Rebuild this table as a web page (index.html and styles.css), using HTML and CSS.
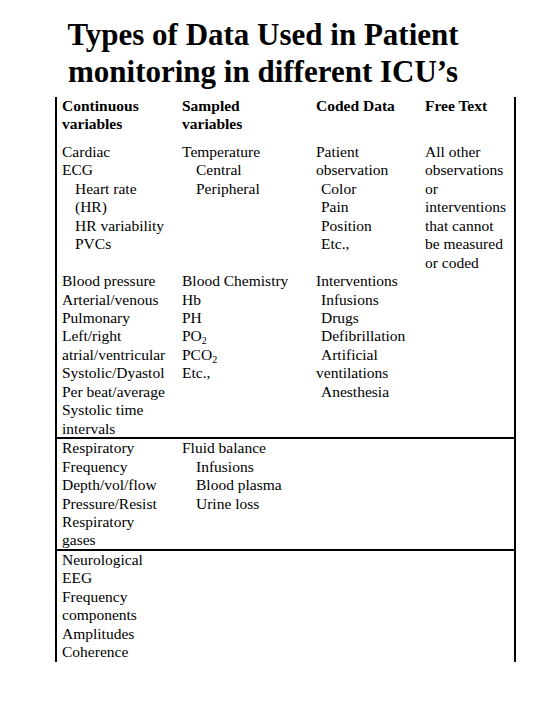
FILE: index.html
```html
<!DOCTYPE html>
<html>
<head>
<meta charset="utf-8">
<link rel="stylesheet" href="styles.css">
</head>
<body>
<h1 class="title">Types of Data Used in Patient<br>monitoring in different ICU’s</h1>
<div class="table">
  <div class="row head">
    <div class="cell c1"><div>Continuous</div><div>variables</div></div>
    <div class="cell c2"><div>Sampled</div><div>variables</div></div>
    <div class="cell c3"><div>Coded Data</div></div>
    <div class="cell c4"><div>Free Text</div></div>
  </div>
  <div class="row">
    <div class="cell c1"><div>Cardiac</div><div>ECG</div><div class="i2">Heart rate</div><div class="i2">(HR)</div><div class="i2">HR variability</div><div class="i2">PVCs</div></div>
    <div class="cell c2"><div>Temperature</div><div class="i3">Central</div><div class="i3">Peripheral</div></div>
    <div class="cell c3"><div>Patient</div><div>observation</div><div class="i1">Color</div><div class="i1">Pain</div><div class="i1">Position</div><div class="i1">Etc.,</div></div>
    <div class="cell c4"><div>All other</div><div>observations</div><div>or</div><div>interventions</div><div>that cannot</div><div>be measured</div><div>or coded</div></div>
  </div>
  <div class="row">
    <div class="cell c1"><div>Blood pressure</div><div>Arterial/venous</div><div>Pulmonary</div><div>Left/right</div><div>atrial/ventricular</div><div>Systolic/Dyastol</div><div>Per beat/average</div><div>Systolic time</div><div>intervals</div></div>
    <div class="cell c2"><div>Blood Chemistry</div><div>Hb</div><div>PH</div><div>PO<sub>2</sub></div><div>PCO<sub>2</sub></div><div>Etc.,</div></div>
    <div class="cell c3"><div>Interventions</div><div class="i1">Infusions</div><div class="i1">Drugs</div><div class="i1">Defibrillation</div><div class="i1">Artificial</div><div>ventilations</div><div class="i1">Anesthesia</div></div>
    <div class="cell c4"></div>
  </div>
  <div class="row ruled">
    <div class="cell c1"><div>Respiratory</div><div>Frequency</div><div>Depth/vol/flow</div><div>Pressure/Resist</div><div>Respiratory</div><div>gases</div></div>
    <div class="cell c2"><div>Fluid balance</div><div class="i3">Infusions</div><div class="i3">Blood plasma</div><div class="i3">Urine loss</div></div>
    <div class="cell c3"></div>
    <div class="cell c4"></div>
  </div>
  <div class="row ruled">
    <div class="cell c1"><div>Neurological</div><div>EEG</div><div>Frequency</div><div>components</div><div>Amplitudes</div><div>Coherence</div></div>
    <div class="cell c2"></div>
    <div class="cell c3"></div>
    <div class="cell c4"></div>
  </div>
</div>
</body>
</html>
```
FILE: styles.css
```css
html, body {
  margin: 0;
  padding: 0;
  background: #ffffff;
  color: #000000;
}
body {
  width: 540px;
  height: 720px;
  overflow: hidden;
  font-family: "Liberation Serif", "Times New Roman", serif;
}
.title {
  margin: 0;
  padding: 16px 14px 0 0;
  height: 97px;
  box-sizing: border-box;
  text-align: center;
  font-size: 31px;
  line-height: 37px;
  font-weight: bold;
}
.table {
  margin-left: 55px;
  width: 457px;
  border-left: 2px solid #000;
  border-right: 2px solid #000;
}
.row {
  display: grid;
  grid-template-columns: 125px 134px 109px 1fr;
  font-size: 15.5px;
  line-height: 18.45px;
}
.row.head {
  font-weight: bold;
  padding-bottom: 9px;
}
.row.ruled {
  border-top: 2px solid #000;
  margin-top: -1px;
}
.cell.c1 { padding-left: 5px; }
.i1 { padding-left: 5px; }
.i2 { padding-left: 13px; }
.i3 { padding-left: 14px; }
sub {
  font-size: 10px;
  line-height: 0;
  vertical-align: -3px;
}
```
